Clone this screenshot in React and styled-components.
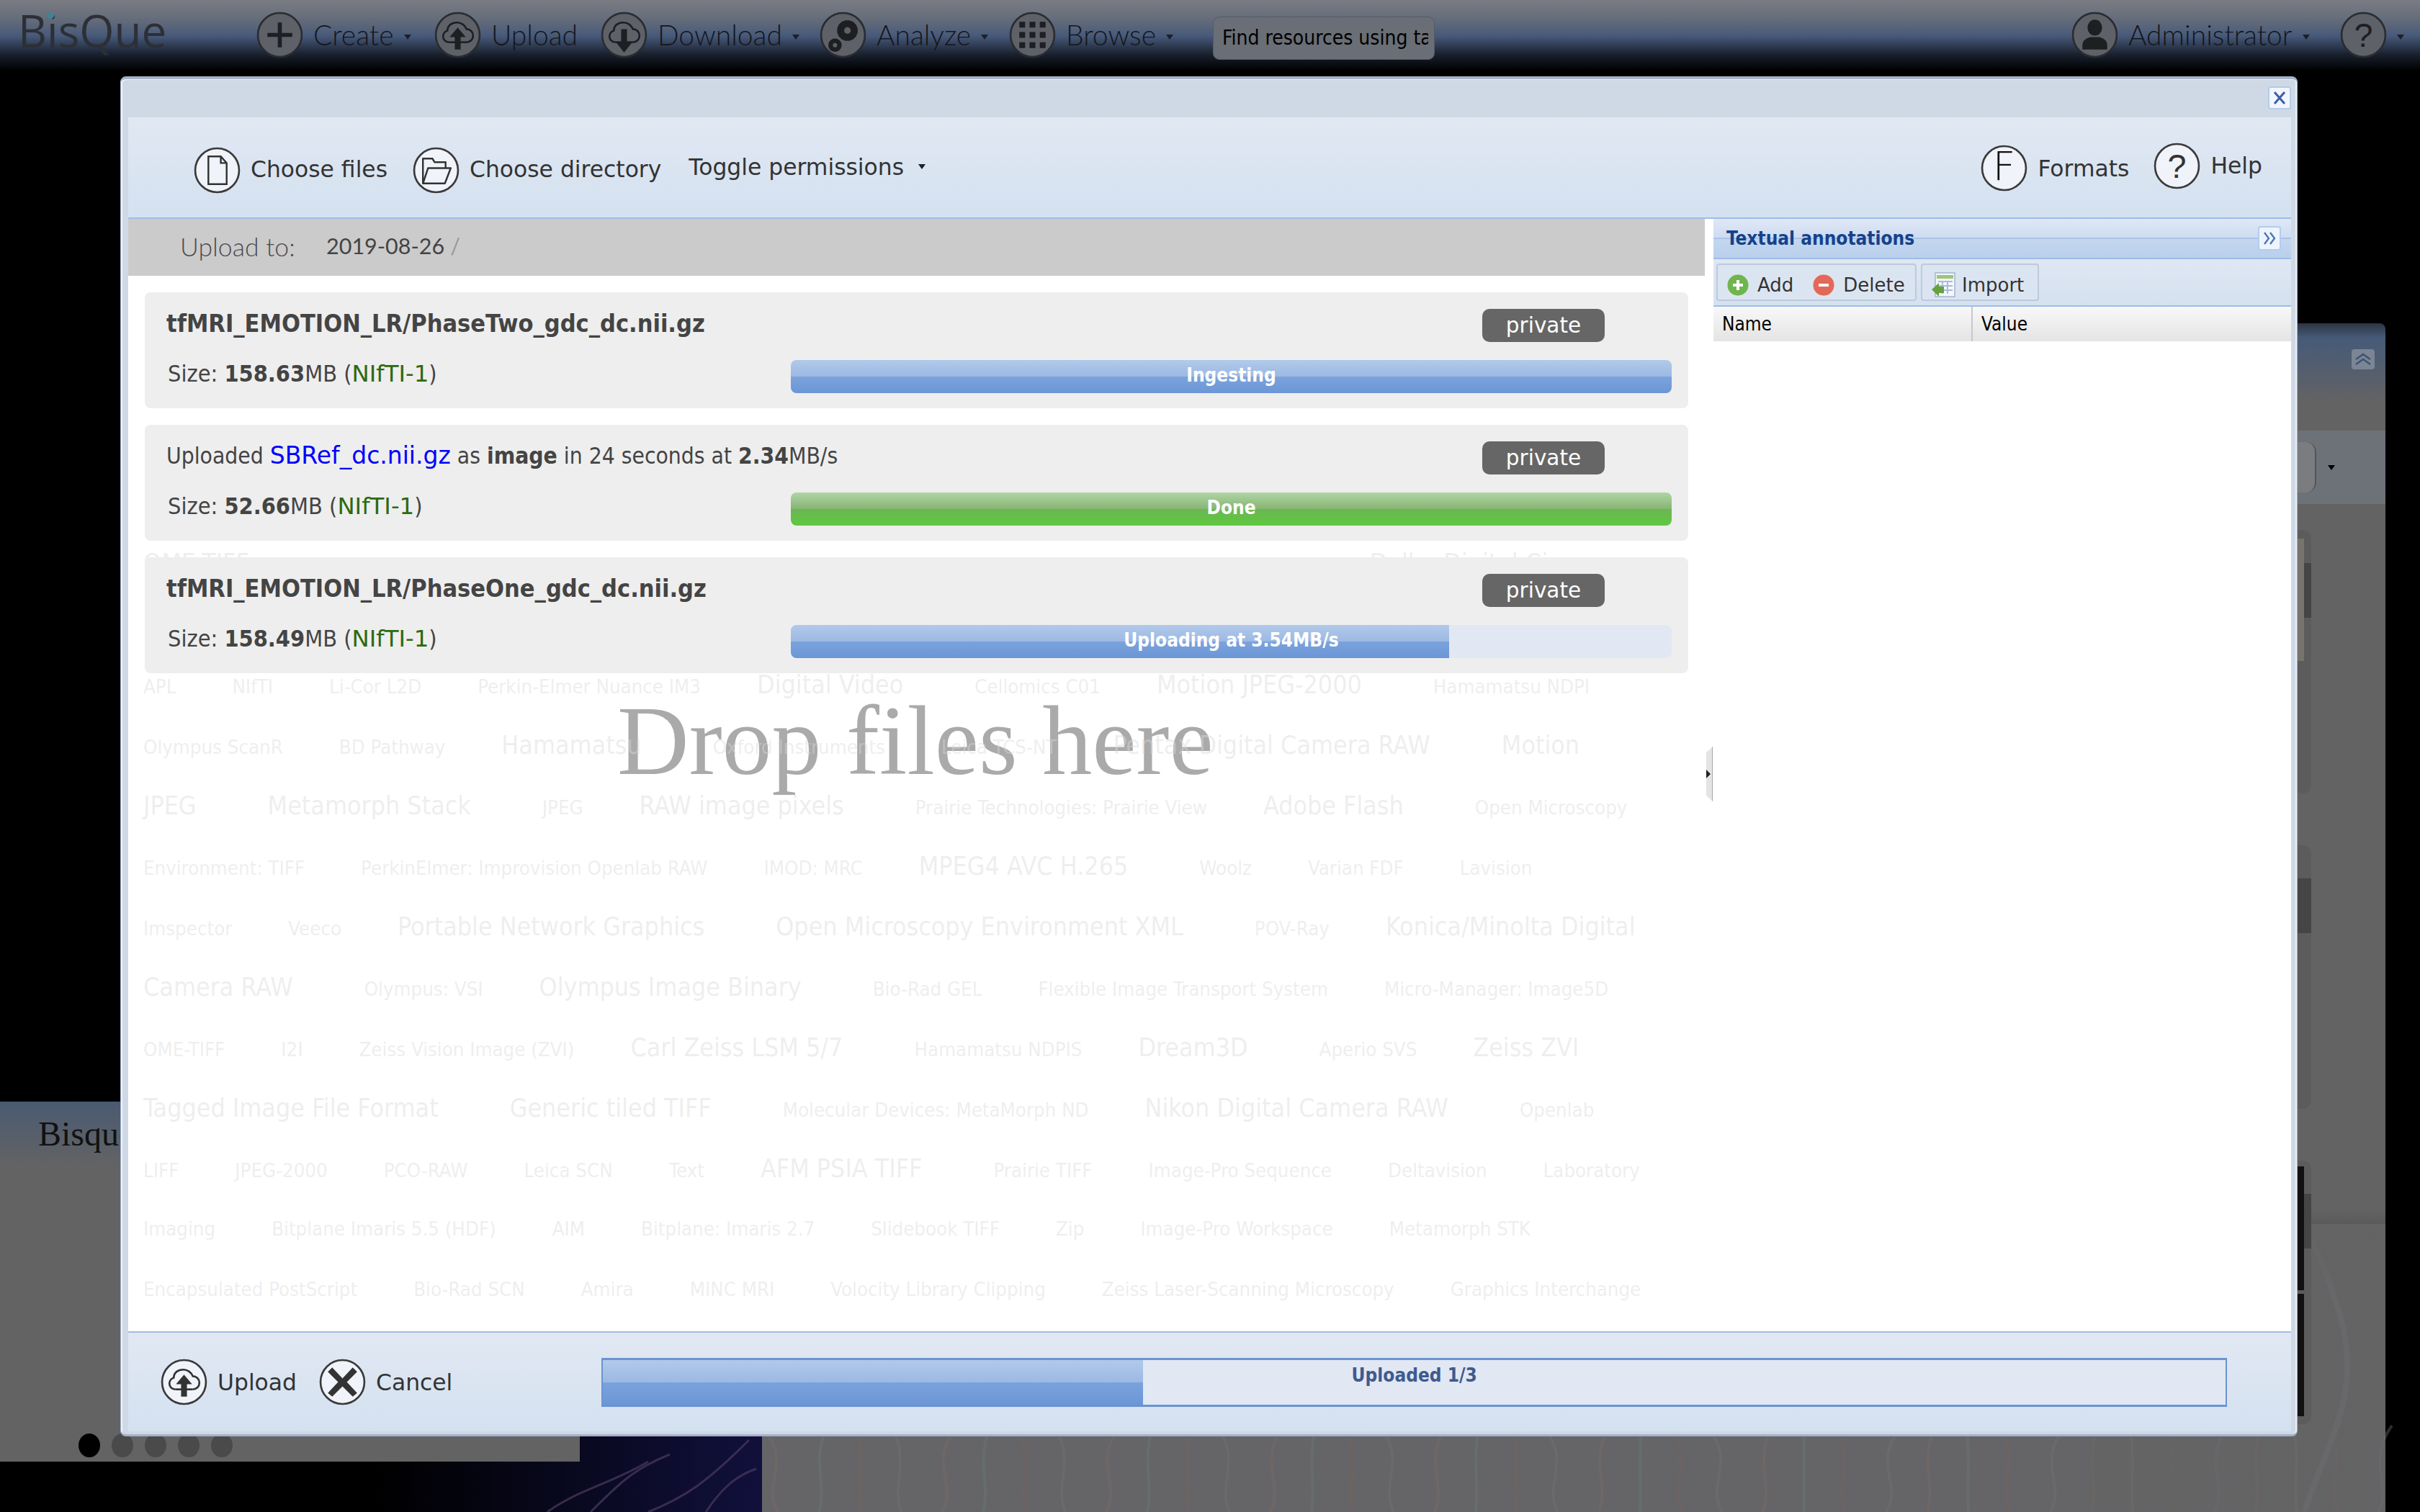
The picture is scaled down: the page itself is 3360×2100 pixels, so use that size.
import styled, { createGlobalStyle } from "styled-components";

const GlobalStyle = createGlobalStyle`
  html, body {
    margin: 0;
    padding: 0;
    background: #000;
  }
`;

const sans = `"DejaVu Sans", Verdana, sans-serif`;
const narrow = `"DejaVu Sans Condensed", "DejaVu Sans", Verdana, sans-serif`;

const Page = styled.div`
  position: relative;
  width: 3360px;
  height: 2100px;
  background: #000;
  overflow: hidden;
  display: flex;
  flex-direction: column;
  font-family: ${sans};
`;

/* top bar, dimmed by the modal mask */
const TopBar = styled.div`
  height: 100px;
  flex: none;
  display: flex;
  align-items: center;
  padding-left: 25px;
  background: linear-gradient(#7b7c83 0%, #616a7a 30%, #47597a 50%, #1a2230 75%, #000 98%);
`;

const Logo = styled.div`
  position: relative;
  width: 331px;
  margin-top: -16px;
  font-family: "Open Sans", sans-serif;
  font-weight: 400;
  font-size: 62px;
  color: #2c3036;
  span {
    position: absolute;
    left: 41px;
    top: 17px;
    width: 9px;
    height: 9px;
    border-radius: 50%;
    background: #3f8496;
  }
`;

const NavItem = styled.div`
  display: flex;
  align-items: center;
  width: ${(p) => p.$width}px;
  margin-top: -4px;
  color: #14161a;
`;

const NavLabel = styled.span`
  margin-left: 14px;
  font-family: Lato, sans-serif;
  font-size: 39px;
  font-weight: 300;
`;

const Caret = styled.i`
  display: inline-block;
  margin-left: ${(p) => p.$left || 14}px;
  margin-top: ${(p) => p.$top || 6}px;
  border-top: 7px solid ${(p) => p.$color || "#1c1f24"};
  border-left: 5px solid transparent;
  border-right: 5px solid transparent;
`;

const SearchBox = styled.div`
  width: 308px;
  height: 60px;
  box-sizing: border-box;
  margin-top: 6px;
  padding: 0 8px 0 12px;
  border: 1px solid #555b66;
  border-radius: 9px;
  background: #6a6e76;
  color: #000;
  font-family: ${narrow};
  font-stretch: condensed;
  font-size: 28px;
  line-height: 58px;
`;

const SearchText = styled.div`
  overflow: hidden;
  white-space: nowrap;
`;

const Spacer = styled.div`
  flex: 1;
`;

const Scene = styled.div`
  position: relative;
  flex: 1;
  display: flex;
  justify-content: space-between;
`;

const LeafArt = styled.svg`
  position: absolute;
  left: 0;
  bottom: 0;
  width: 3360px;
  height: 500px;
`;

const LeftColumn = styled.div`
  position: relative;
  width: 805px;
  padding-top: 1430px;
  box-sizing: border-box;
`;

const Hero = styled.div`
  height: 500px;
  box-sizing: border-box;
  padding: 17px 0 0 53px;
  display: flex;
  flex-direction: column;
  background: linear-gradient(#4a5a72 0, #636363 90px);
`;

const HeroTitle = styled.div`
  font-family: "Liberation Serif", serif;
  font-size: 48px;
  color: #111;
  flex: 1;
`;

const Dots = styled.div`
  display: flex;
  gap: 16px;
  margin: 0 0 6px 56px;
`;

const Dot = styled.b`
  width: 30px;
  height: 33px;
  border-radius: 50%;
  background: ${(p) => (p.$active ? "#000" : "#4a4a4a")};
`;

const Sidebar = styled.div`
  position: relative;
  width: 412px;
  margin-right: 48px;
  padding-top: 349px;
  box-sizing: border-box;
`;

const SidebarHead = styled.div`
  height: 149px;
  border-radius: 8px 8px 0 0;
  background: linear-gradient(#2c3442 0, #465a78 20px, #636363 110px);
  display: flex;
  justify-content: flex-end;
`;

const CollapseBtn = styled.div`
  width: 32px;
  height: 28px;
  margin: 36px 15px 0 0;
  border-radius: 4px;
  background: #7b8594;
  display: flex;
  align-items: center;
  justify-content: center;
`;

const SidebarTools = styled.div`
  height: 102px;
  background: #6d7178;
  display: flex;
  align-items: center;
  justify-content: flex-end;
  padding-right: 70px;
`;

const SideButton = styled.div`
  width: 120px;
  height: 70px;
  margin-right: 10px;
  border-radius: 0 14px 14px 0;
  border-right: 2px solid #555;
  background: #7a7c80;
`;

const SidebarBody = styled.div`
  height: 1400px;
  background: linear-gradient(#636363 980px, rgba(99, 99, 99, 0.35) 1120px);
  display: flex;
  flex-direction: column;
  gap: 72px;
  padding: 36px 0 0 0;
  box-sizing: border-box;
`;

const ResultCard = styled.div`
  position: relative;
  flex: none;
  width: 309px;
  height: 366px;
  border-radius: 12px;
  background: #5c5c5c;
  padding-top: 46px;
  box-sizing: border-box;
`;

const ResultBand = styled.div`
  height: 76px;
  background: #454545;
`;

const Thumb = styled.div`
  position: absolute;
  right: 10px;
  top: ${(p) => p.$top}px;
  width: 100px;
  height: ${(p) => p.$height}px;
  background: ${(p) => p.$color};
`;

/* modal window */
const Modal = styled.div`
  position: absolute;
  left: 167px;
  top: 106px;
  width: 3023px;
  height: 1889px;
  box-sizing: border-box;
  padding: 0 8px 4px 10px;
  display: flex;
  flex-direction: column;
  border-radius: 8px;
  background: #cfd9e6;
  border: 1px solid #a4b2c9;
  border-top-width: 4px;
  border-bottom-width: 3px;
  box-shadow: inset 2px 1px 0 #eef3fa, inset -2px 0 0 #e8eef7;
`;

const ModalHeader = styled.div`
  height: 53px;
  flex: none;
  display: flex;
  justify-content: flex-end;
  align-items: flex-start;
  padding-top: 10px;
  box-sizing: border-box;
`;

const CloseBtn = styled.div`
  width: 32px;
  height: 32px;
  box-sizing: border-box;
  border: 2px solid #b4cbee;
  border-radius: 4px;
  background: #f2f6fc;
  display: flex;
  align-items: center;
  justify-content: center;
`;

const Toolbar = styled.div`
  height: 141px;
  flex: none;
  box-sizing: border-box;
  padding: 0 40px 0 91px;
  display: flex;
  align-items: center;
  border-bottom: 2px solid #9fbce8;
  background: linear-gradient(#e1e8f3, #d4e1f0);
`;

const ToolButton = styled.div`
  display: flex;
  align-items: center;
  margin-right: ${(p) => p.$gap || 0}px;
  margin-top: ${(p) => p.$top || 0}px;
  color: #333;
`;

const ToolLabel = styled.span`
  margin-left: 14px;
  margin-top: ${(p) => p.$lift || 0}px;
  font-size: 31.4px;
  white-space: nowrap;
`;

const ToggleLabel = styled.span`
  font-size: 31.4px;
  color: #333;
  margin-top: -2px;
`;

const Main = styled.div`
  flex: 1;
  display: flex;
  background: #fff;
  min-height: 0;
`;

const UploadPane = styled.div`
  position: relative;
  width: 2189px;
  flex: none;
  overflow: hidden;
`;

const UploadTo = styled.div`
  position: relative;
  z-index: 3;
  height: 79px;
  box-sizing: border-box;
  padding-left: 72px;
  display: flex;
  align-items: center;
  background: #cbcbcb;
  color: #4d4d4d;
`;

const UploadToLabel = styled.span`
  font-family: Lato, sans-serif;
  font-size: 35.6px;
  font-weight: 300;
  width: 203px;
  margin-top: -2px;
`;

const UploadToPath = styled.span`
  font-family: Lato, sans-serif;
  font-size: 30.5px;
  color: #444;
  margin-top: -6px;
  em {
    font-style: normal;
    color: #999;
    margin-left: 8px;
  }
`;

const Cards = styled.div`
  position: relative;
  z-index: 3;
  display: flex;
  flex-direction: column;
  gap: 23px;
  padding: 23px 23px 0;
`;

const Card = styled.div`
  height: 161px;
  box-sizing: border-box;
  padding: 19px 23px 0 30px;
  border-radius: 8px;
  background: #eee;
  color: #444;
  font-family: ${narrow};
  font-stretch: condensed;
  font-size: 31.5px;
  display: grid;
  grid-template-columns: 867px 1fr;
  grid-template-rows: 47px 46px;
  row-gap: 28px;
  align-items: center;
  white-space: nowrap;
`;

const CardHead = styled.div`
  font-size: ${(p) => (p.$title ? 34 : 31.5)}px;
`;

const SizeLine = styled.div`
  margin-top: -8px;
  padding-left: 2px;
  font-size: 32.2px;
`;

const CardRight = styled.div`
  display: flex;
  justify-content: flex-end;
  padding-right: 93px;
`;

const Badge = styled.span`
  width: 170px;
  height: 46px;
  margin-top: 7px;
  border-radius: 10px;
  background: #666;
  color: #fff;
  font-family: ${sans};
  font-stretch: normal;
  font-size: 29.5px;
  line-height: 46px;
  text-align: center;
`;

const FileLink = styled.a`
  color: #0000ff;
  font-family: ${sans};
  font-stretch: normal;
  font-size: 33px;
`;

const Format = styled.span`
  color: #2d6a0e;
  font-family: ${sans};
  font-stretch: normal;
  font-size: 32.4px;
`;

const Bar = styled.div`
  position: relative;
  height: 46px;
  border-radius: 8px;
  overflow: hidden;
  background: #e1e8f3;
`;

const Fill = styled.div`
  position: absolute;
  left: 0;
  top: 0;
  bottom: 0;
  background: ${(p) =>
    p.$green
      ? "linear-gradient(#afd5a5 0, #86b572 50%, #6ab654 50%, #5fc93d 100%)"
      : "linear-gradient(#b1c9eb 0, #9cb9e2 50%, #7ba3dc 50%, #6b96d6 100%)"};
`;

const BarLabel = styled.div`
  position: absolute;
  inset: 0;
  color: ${(p) => p.$color || "#fff"};
  font-family: ${narrow};
  font-stretch: condensed;
  font-size: 26px;
  font-weight: 700;
  line-height: 43px;
  text-align: center;
`;

const Cloud = styled.div`
  position: absolute;
  z-index: 2;
  left: 21px;
  top: 436px;
  right: 0;
  color: rgba(218, 218, 218, 0.45);
  font-family: ${narrow};
  font-stretch: condensed;
  white-space: nowrap;
`;

const CloudRow = styled.div`
  height: ${(p) => p.$height || 84}px;
  line-height: 84px;
  display: flex;
  align-items: baseline;
`;

const CloudWord = styled.span`
  font-size: ${(p) => (p.$large ? 35.5 : 27.4)}px;
  margin-left: ${(p) => p.$indent || 0}px;
  margin-right: ${(p) => (p.$large ? 99 : 78)}px;
`;

const DropHint = styled.div`
  position: absolute;
  z-index: 1;
  left: 679px;
  top: 656px;
  font-family: "Liberation Serif", serif;
  font-size: 138px;
  line-height: 1;
  color: #aaa;
  white-space: nowrap;
`;

const Splitter = styled.div`
  position: relative;
  width: 12px;
  flex: none;
`;

const SplitHandle = styled.div`
  position: absolute;
  left: 2px;
  top: 733px;
  width: 8px;
  height: 76px;
  background: #e4e4e4;
  border-right: 1px solid #aaa;
  clip-path: polygon(0 8px, 100% 0, 100% 100%, 0 calc(100% - 8px));
  &::after {
    content: "";
    position: absolute;
    left: 0;
    top: 32px;
    border-left: 6px solid #222;
    border-top: 6px solid transparent;
    border-bottom: 6px solid transparent;
  }
`;

const SidePanel = styled.div`
  flex: 1;
  display: flex;
  flex-direction: column;
  min-width: 0;
`;

const PanelHeader = styled.div`
  position: relative;
  height: 56px;
  flex: none;
  box-sizing: border-box;
  display: flex;
  align-items: center;
  padding: 0 14px 0 18px;
  justify-content: space-between;
  border-bottom: 2px solid #9fbce8;
  background: linear-gradient(#dfe8f6 0, #cedcf1 48%, #aac4e7 48%, #aac4e7 52%, #c4d7ef 52%, #b9cfeb 100%);
  color: #15428b;
  font-family: ${narrow};
  font-stretch: condensed;
  font-size: 26px;
  font-weight: 700;
`;

const PanelButton = styled.div`
  width: 32px;
  height: 34px;
  box-sizing: border-box;
  border: 2px solid #b4cbee;
  border-radius: 4px;
  background: #eef4fc;
  display: flex;
  align-items: center;
  justify-content: center;
`;

const PanelTools = styled.div`
  height: 66px;
  flex: none;
  box-sizing: border-box;
  padding: 6px 4px 0;
  display: flex;
  gap: 6px;
  border-bottom: 2px solid #9fbce8;
  background: linear-gradient(#dfe7f3, #d5e1f0);
`;

const ToolGroup = styled.div`
  width: ${(p) => p.$width}px;
  height: 52px;
  box-sizing: border-box;
  padding: 7px 0 0 12px;
  display: flex;
  align-items: center;
  gap: ${(p) => p.$gap || 0}px;
  border: 2px solid #bccadb;
  border-radius: 4px;
  background: #dbe5f2;
`;

const PanelTool = styled.div`
  display: flex;
  align-items: center;
  gap: ${(p) => p.$gap || 11}px;
  color: #333;
  font-size: 26px;
  white-space: nowrap;
`;

const GridHeader = styled.div`
  height: 48px;
  flex: none;
  display: grid;
  grid-template-columns: 358px 1fr;
  background: linear-gradient(#f8f8f8, #e4e4e4);
  color: #000;
  font-family: ${narrow};
  font-stretch: condensed;
  font-size: 26px;
  line-height: 48px;
`;

const GridCell = styled.div`
  padding-left: 12px;
  & + & {
    border-left: 2px solid #c8c8c8;
  }
`;

const Footer = styled.div`
  height: 139px;
  flex: none;
  box-sizing: border-box;
  padding: 0 89px 0 45px;
  display: flex;
  align-items: center;
  border-top: 2px solid #9fbce8;
  background: linear-gradient(#e1e8f3, #d4e1f0);
`;

const FooterBar = styled.div`
  position: relative;
  flex: 1;
  height: 68px;
  margin-left: ${(p) => p.$left}px;
  box-sizing: border-box;
  border: 3px solid #6b93cf;
  border-left-width: 2px;
  border-right-width: 2px;
  background: #e1e8f3;
`;

const Round = ({ light, children, size = 65 }) => (
  <svg width={size} height={size} viewBox="0 0 64 64" style={{ flex: "none" }}>
    <circle
      cx="32"
      cy="32"
      r="30"
      fill={light ? "#f0f3f9" : "#5e6268"}
      stroke={light ? "#3a3a3a" : "#2a2c30"}
      strokeWidth="2.6"
    />
    {children}
  </svg>
);

const cloudPath =
  "M20 42c-5 0-8-4-8-8 0-4 3-7 6-8 0-7 6-11 13-11 6 0 11 4 13 9 5 0 9 4 9 9s-4 9-9 9";

const CloudUp = ({ color }) => (
  <>
    <path d={cloudPath} fill="none" stroke={color} strokeWidth="2.6" />
    <path d="M20 42h24" fill="none" stroke={color} strokeWidth="2.6" />
    <path d="M32 22 21 35h7v17h8V35h7z" fill={color} />
  </>
);

const CloudDown = ({ color }) => (
  <>
    <path d={cloudPath} fill="none" stroke={color} strokeWidth="2.6" />
    <path d="M20 42h24" fill="none" stroke={color} strokeWidth="2.6" />
    <path d="M28 24h8v18h7L32 56 21 42h7z" fill={color} />
  </>
);

const gear = (cx, cy, r, teeth, color) => {
  const bits = [];
  for (let i = 0; i < teeth; i++) {
    bits.push(
      <rect
        key={i}
        x={cx - r * 0.2}
        y={cy - r}
        width={r * 0.4}
        height={r * 2}
        fill={color}
        transform={`rotate(${(i * 180) / teeth} ${cx} ${cy})`}
      />
    );
  }
  return (
    <g>
      {bits}
      <circle cx={cx} cy={cy} r={r * 0.74} fill={color} />
      <circle cx={cx} cy={cy} r={r * 0.32} fill="#5e6268" />
    </g>
  );
};

const Plus = () => <path d="M32 15v34M15 32h34" stroke="#1d1f23" strokeWidth="5.5" fill="none" />;

const Gears = () => (
  <>
    {gear(38, 26, 14, 8, "#1d1f23")}
    {gear(21, 46, 9, 8, "#1d1f23")}
  </>
);

const GridDots = () => {
  const cells = [];
  for (let r = 0; r < 3; r++) {
    for (let c = 0; c < 3; c++) {
      cells.push(<rect key={`${r}${c}`} x={14 + c * 14} y={14 + r * 14} width="8" height="8" fill="#1d1f23" />);
    }
  }
  return <>{cells}</>;
};

const Person = () => (
  <>
    <ellipse cx="32" cy="22" rx="10" ry="11" fill="#1d1f23" />
    <path d="M15 52v-6c0-7 7-10 11-11h12c4 1 11 4 11 11v6z" fill="#1d1f23" />
  </>
);

const Mark = ({ color, children, size = 46, weight = 400, family = "Liberation Sans" }) => (
  <text x="32" y="48" textAnchor="middle" fontSize={size} fontWeight={weight} fontFamily={family} fill={color}>
    {children}
  </text>
);

const FileIcon = () => (
  <path d="M20 13h17l8 9v29H20z M37 13v9h8" fill="none" stroke="#333" strokeWidth="2.4" />
);

const FolderIcon = () => (
  <path
    d="M14 50V16h13l3 5h15v8 M14 50l7-21h31l-8 21z"
    fill="none"
    stroke="#333"
    strokeWidth="2.4"
    strokeLinejoin="round"
  />
);

const CrossIcon = () => <path d="M18 12 32 27 46 12l6 6-14 14 14 15-6 5-14-14-14 14-6-5 14-15-14-14z" fill="#333" />;

const ClearButton = () => (
  <svg width="20" height="22" viewBox="0 0 20 22">
    <path d="M3 3 17 19M17 3 3 19" stroke="#3d5fa8" strokeWidth="3" />
  </svg>
);

const Chevrons = () => (
  <svg width="20" height="22" viewBox="0 0 20 22">
    <path d="M3 3l6 8-6 8M11 3l6 8-6 8" fill="none" stroke="#4b78b8" strokeWidth="2.4" />
  </svg>
);

const UpChevrons = () => (
  <svg width="24" height="20" viewBox="0 0 24 20">
    <path d="M2 10 12 3l10 7M2 17l10-7 10 7" fill="none" stroke="#3d5378" strokeWidth="2.4" />
  </svg>
);

const SmallRound = ({ color, sign }) => (
  <svg width="32" height="32" viewBox="0 0 32 32">
    <circle cx="16" cy="16" r="15" fill={color} stroke="#fff" strokeOpacity="0.5" />
    <path d={sign === "plus" ? "M16 9v14M9 16h14" : "M9 16h14"} stroke="#fff" strokeWidth="4" />
  </svg>
);

const ImportIcon = () => (
  <svg width="34" height="36" viewBox="0 0 34 36">
    <rect x="6" y="1" width="27" height="33" fill="#f4f7fb" stroke="#7f98bd" />
    <rect x="8" y="4" width="23" height="5" fill="#9ec57a" />
    <path d="M10 13h20M10 19h20M10 25h20M16 12v18M23 12v18" stroke="#a9bbd6" strokeWidth="2" />
    <path d="M1 24 11 15v5h7v9h-7v5z" fill="#66a13f" />
  </svg>
);

const tagRows = [
  [["OME-TIFF", 1], ["Dolby Digital Cinema", 1, 1457]],
  [
    ["APL"],
    ["NIfTI"],
    ["Li-Cor L2D"],
    ["Perkin-Elmer Nuance IM3"],
    ["Digital Video", 1],
    ["Cellomics C01"],
    ["Motion JPEG-2000", 1],
    ["Hamamatsu NDPI"],
  ],
  [
    ["Olympus ScanR"],
    ["BD Pathway"],
    ["Hamamatsu", 1],
    ["Oxford Instruments"],
    ["Leica TCS-NT"],
    ["Pentax Digital Camera RAW", 1],
    ["Motion", 1],
  ],
  [
    ["JPEG", 1],
    ["Metamorph Stack", 1],
    ["JPEG"],
    ["RAW image pixels", 1],
    ["Prairie Technologies: Prairie View"],
    ["Adobe Flash", 1],
    ["Open Microscopy"],
  ],
  [
    ["Environment: TIFF"],
    ["PerkinElmer: Improvision Openlab RAW"],
    ["IMOD: MRC"],
    ["MPEG4 AVC H.265", 1],
    ["Woolz"],
    ["Varian FDF"],
    ["Lavision"],
  ],
  [
    ["Imspector"],
    ["Veeco"],
    ["Portable Network Graphics", 1],
    ["Open Microscopy Environment XML", 1],
    ["POV-Ray"],
    ["Konica/Minolta Digital", 1],
  ],
  [
    ["Camera RAW", 1],
    ["Olympus: VSI"],
    ["Olympus Image Binary", 1],
    ["Bio-Rad GEL"],
    ["Flexible Image Transport System"],
    ["Micro-Manager: Image5D"],
  ],
  [
    ["OME-TIFF"],
    ["I2I"],
    ["Zeiss Vision Image (ZVI)"],
    ["Carl Zeiss LSM 5/7", 1],
    ["Hamamatsu NDPIS"],
    ["Dream3D", 1],
    ["Aperio SVS"],
    ["Zeiss ZVI", 1],
  ],
  [
    ["Tagged Image File Format", 1],
    ["Generic tiled TIFF", 1],
    ["Molecular Devices: MetaMorph ND"],
    ["Nikon Digital Camera RAW", 1],
    ["Openlab"],
  ],
  [
    ["LIFF"],
    ["JPEG-2000"],
    ["PCO-RAW"],
    ["Leica SCN"],
    ["Text"],
    ["AFM PSIA TIFF", 1],
    ["Prairie TIFF"],
    ["Image-Pro Sequence"],
    ["Deltavision"],
    ["Laboratory"],
  ],
  [
    ["Imaging"],
    ["Bitplane Imaris 5.5 (HDF)"],
    ["AIM"],
    ["Bitplane: Imaris 2.7"],
    ["Slidebook TIFF"],
    ["Zip"],
    ["Image-Pro Workspace"],
    ["Metamorph STK"],
  ],
  [
    ["Encapsulated PostScript"],
    ["Bio-Rad SCN"],
    ["Amira"],
    ["MINC MRI"],
    ["Volocity Library Clipping"],
    ["Zeiss Laser-Scanning Microscopy"],
    ["Graphics Interchange"],
  ],
];

const veinColors = ["#7b6a66", "#6a7a70", "#76645f", "#70707a"];

// faint near-vertical veins of the leaf picture behind the mask
const veins = Array.from({ length: 40 }, (_, i) => {
  const x = 1080 + i * 57;
  const lean = ((i * 37) % 50) - 25;
  return {
    d: `M${x} 500C${x + lean} 460 ${x - lean} 430 ${x + lean} 380`,
    color: veinColors[i % veinColors.length],
  };
});

const UploadItem = ({ head, title, size, format, label, green, percent = 100 }) => (
  <Card>
    <CardHead $title={title}>{head}</CardHead>
    <CardRight>
      <Badge>private</Badge>
    </CardRight>
    <SizeLine>
      Size: <b>{size}</b>MB (<Format>{format}</Format>)
    </SizeLine>
    <Bar>
      <Fill $green={green} style={{ width: `${percent}%` }} />
      <BarLabel>{label}</BarLabel>
    </Bar>
  </Card>
);

export default function App() {
  return (
    <Page>
      <GlobalStyle />
      <TopBar>
        <Logo>
          BisQue
          <span />
        </Logo>
        <NavItem $width={247}>
          <Round>
            <Plus />
          </Round>
          <NavLabel>Create</NavLabel>
          <Caret />
        </NavItem>
        <NavItem $width={231}>
          <Round>
            <CloudUp color="#1d1f23" />
          </Round>
          <NavLabel>Upload</NavLabel>
        </NavItem>
        <NavItem $width={304}>
          <Round>
            <CloudDown color="#1d1f23" />
          </Round>
          <NavLabel>Download</NavLabel>
          <Caret />
        </NavItem>
        <NavItem $width={263}>
          <Round>
            <Gears />
          </Round>
          <NavLabel>Analyze</NavLabel>
          <Caret />
        </NavItem>
        <NavItem $width={283}>
          <Round>
            <GridDots />
          </Round>
          <NavLabel>Browse</NavLabel>
          <Caret />
        </NavItem>
        <SearchBox>
          <SearchText>Find resources using ta</SearchText>
        </SearchBox>
        <Spacer />
        <NavItem $width={373}>
          <Round>
            <Person />
          </Round>
          <NavLabel>Administrator</NavLabel>
          <Caret />
        </NavItem>
        <NavItem $width={111}>
          <Round>
            <Mark color="#1d1f23">?</Mark>
          </Round>
          <Caret />
        </NavItem>
      </TopBar>

      <Scene>
        <LeafArt viewBox="0 0 3360 500">
          <defs>
            <linearGradient id="darkLeaf" x1="0" x2="1" y1="0" y2="0">
              <stop offset="0" stopColor="#000" />
              <stop offset="1" stopColor="#11103c" />
            </linearGradient>
          </defs>
          <rect x="520" y="390" width="538" height="110" fill="url(#darkLeaf)" />
          <rect x="1058" y="390" width="2254" height="110" fill="#656567" />
          <rect x="3100" y="100" width="212" height="400" fill="#646466" />
          <g fill="none" strokeWidth="4" opacity="0.4">
            {veins.map((v) => (
              <path key={v.d} d={v.d} stroke={v.color} />
            ))}
            <path d="M3200 500C3230 400 3290 330 3240 200C3225 150 3210 120 3190 100" stroke="#76747e" strokeWidth="8" />
          </g>
          <g fill="none" stroke="#4c3a5e" strokeWidth="3" opacity="0.7">
            <path d="M760 500C800 470 850 460 900 430M900 500C950 480 980 460 1040 400M820 500C860 460 880 440 930 420M980 500C1000 470 1020 450 1050 440" />
          </g>
        </LeafArt>
        <LeftColumn>
          <Hero>
            <HeroTitle>Bisque</HeroTitle>
            <Dots>
              <Dot $active />
              <Dot />
              <Dot />
              <Dot />
              <Dot />
            </Dots>
          </Hero>
        </LeftColumn>
        <Sidebar>
          <SidebarHead>
            <CollapseBtn>
              <UpChevrons />
            </CollapseBtn>
          </SidebarHead>
          <SidebarTools>
            <SideButton />
            <Caret $left={6} $top={1} $color="#000" />
          </SidebarTools>
          <SidebarBody>
            <ResultCard>
              <Thumb $top={12} $height={170} $color="#77736d" />
              <ResultBand />
            </ResultCard>
            <ResultCard>
              <ResultBand />
            </ResultCard>
            <ResultCard>
              <ResultBand />
              <Thumb $top={8} $height={172} $color="#111" />
              <Thumb $top={185} $height={170} $color="#111" />
            </ResultCard>
          </SidebarBody>
        </Sidebar>
      </Scene>

      <Modal>
        <ModalHeader>
          <CloseBtn>
            <ClearButton />
          </CloseBtn>
        </ModalHeader>
        <Toolbar>
          <ToolButton $gap={35} $top={8}>
            <Round light>
              <FileIcon />
            </Round>
            <ToolLabel $lift={-4}>Choose files</ToolLabel>
          </ToolButton>
          <ToolButton $gap={38} $top={8}>
            <Round light>
              <FolderIcon />
            </Round>
            <ToolLabel $lift={-4}>Choose directory</ToolLabel>
          </ToolButton>
          <ToggleLabel>Toggle permissions</ToggleLabel>
          <Caret $left={20} $top={-2} />
          <Spacer />
          <ToolButton $gap={34} $top={2}>
            <Round light>
              <Mark color="#111" size={54} weight={200} family="DejaVu Sans">
                F
              </Mark>
            </Round>
            <ToolLabel>Formats</ToolLabel>
          </ToolButton>
          <ToolButton $top={-5}>
            <Round light>
              <Mark color="#333">?</Mark>
            </Round>
            <ToolLabel>Help</ToolLabel>
          </ToolButton>
        </Toolbar>
        <Main>
          <UploadPane>
            <UploadTo>
              <UploadToLabel>Upload to:</UploadToLabel>
              <UploadToPath>
                2019-08-26<em>/</em>
              </UploadToPath>
            </UploadTo>
            <Cards>
              <UploadItem
                title
                head={<b>tfMRI_EMOTION_LR/PhaseTwo_gdc_dc.nii.gz</b>}
                size="158.63"
                format="NIfTI-1"
                label="Ingesting"
              />
              <UploadItem
                head={
                  <>
                    Uploaded <FileLink>SBRef_dc.nii.gz</FileLink> as <b>image</b> in 24 seconds at <b>2.34</b>MB/s
                  </>
                }
                size="52.66"
                format="NIfTI-1"
                label="Done"
                green
              />
              <UploadItem
                title
                head={<b>tfMRI_EMOTION_LR/PhaseOne_gdc_dc.nii.gz</b>}
                size="158.49"
                format="NIfTI-1"
                label="Uploading at 3.54MB/s"
                percent={74.7}
              />
            </Cards>
            <DropHint>Drop files here</DropHint>
            <Cloud>
              {tagRows.map((row, i) => (
                <CloudRow key={i} $height={i === 0 ? 169 : 84}>
                  {row.map(([name, large, indent]) => (
                    <CloudWord key={name} $large={large} $indent={indent}>
                      {name}
                    </CloudWord>
                  ))}
                </CloudRow>
              ))}
            </Cloud>
          </UploadPane>
          <Splitter>
            <SplitHandle />
          </Splitter>
          <SidePanel>
            <PanelHeader>
              Textual annotations
              <PanelButton>
                <Chevrons />
              </PanelButton>
            </PanelHeader>
            <PanelTools>
              <ToolGroup $width={278} $gap={26}>
                <PanelTool>
                  <SmallRound color="#6fb54e" sign="plus" />
                  Add
                </PanelTool>
                <PanelTool>
                  <SmallRound color="#e2685a" sign="minus" />
                  Delete
                </PanelTool>
              </ToolGroup>
              <ToolGroup $width={164}>
                <PanelTool $gap={9}>
                  <ImportIcon />
                  Import
                </PanelTool>
              </ToolGroup>
            </PanelTools>
            <GridHeader>
              <GridCell>Name</GridCell>
              <GridCell>Value</GridCell>
            </GridHeader>
          </SidePanel>
        </Main>
        <Footer>
          <ToolButton $gap={31}>
            <Round light>
              <CloudUp color="#333" />
            </Round>
            <ToolLabel>Upload</ToolLabel>
          </ToolButton>
          <ToolButton>
            <Round light>
              <CrossIcon />
            </Round>
            <ToolLabel>Cancel</ToolLabel>
          </ToolButton>
          <FooterBar $left={207}>
            <Fill style={{ width: "33.3%" }} />
            <BarLabel $color="#3f5a8f">Uploaded 1/3</BarLabel>
          </FooterBar>
        </Footer>
      </Modal>
    </Page>
  );
}
